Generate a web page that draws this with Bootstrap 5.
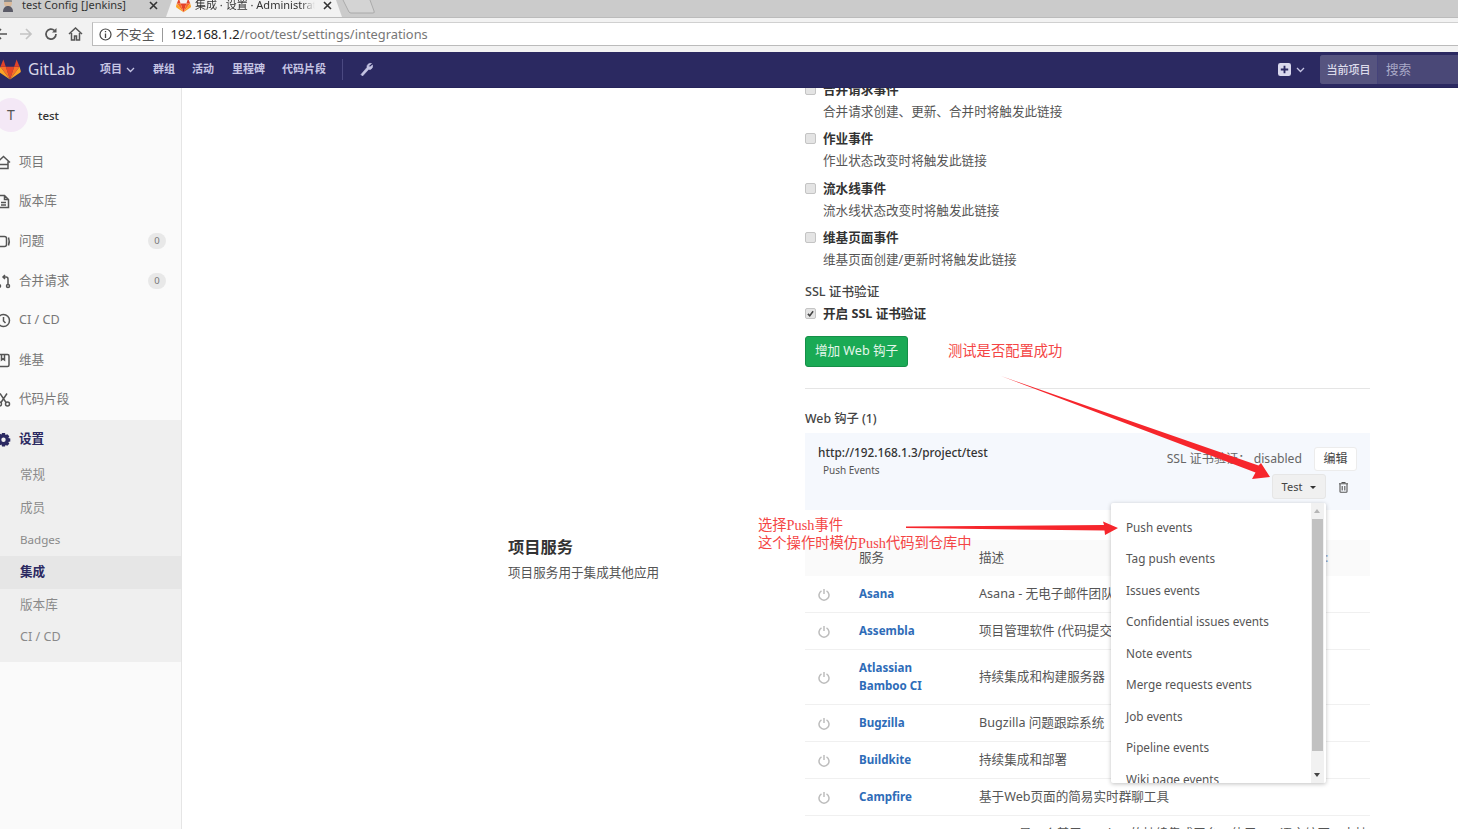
<!DOCTYPE html>
<html lang="zh-CN">
<head>
    <meta charset="UTF-8">
    <title>集成 · 设置 · Administrator</title>
    <link rel="stylesheet" href="https://cdn.jsdelivr.net/npm/bootstrap@5.3.2/dist/css/bootstrap.min.css">
    <style>
        html, body { height: 100%; overflow: hidden; }
        body { font-family: "Noto Sans", "Noto Sans CJK SC", sans-serif; font-size: 12.6px; color: #555; background: #fff; position: relative; }

        /* browser chrome */
        .tab-strip { height: 17px; background: #cbcbcb; font-size: 11px; color: #333; overflow: hidden; }
        .tab-one { width: 172px; height: 17px; padding-left: 22px; line-height: 10px; position: relative; }
        .tab-one .tab-close { left: 149px; }
        .tab-active { width: 176px; height: 17px; margin-left: -6px; background: #f2f2f2; clip-path: polygon(0 100%, 6px 0, 170px 0, 176px 100%); line-height: 10px; padding-left: 29px; position: relative; }
        .tab-active .tab-close { left: 157px; }
        .tab-active .tab-title { width: 120px; white-space: nowrap; overflow: hidden; -webkit-mask-image: linear-gradient(90deg, #000 88%, transparent); mask-image: linear-gradient(90deg, #000 88%, transparent); }
        .tab-close { position: absolute; top: 1px; width: 9px; height: 9px; }
        .tab-fav { position: absolute; top: -1px; left: 1px; }
        .tab-active .tab-fav { left: 10px; top: -2px; }
        .browser-bar { height: 35px; background: #f2f2f2; border-top: 1px solid #bbb; padding: 4px 0 6px 0; }
        .bar-btn { width: 25px; text-align: center; line-height: 0; }
        .omnibox { height: 24px; margin-left: 4px; flex: 1; background: #fff; border: 1px solid #bbb; border-right: 0; border-top-color: #d0d0d0; padding: 1px 0 0 6px; font-size: 12.85px; color: #555; }
        .omni-sep { width: 1px; height: 14px; background: #999; margin: 0 8px 0 7px; }
        .omni-host { color: #222; }
        .omni-path { color: #777; }

        /* gitlab header */
        .gl-nav { height: 36px; background: #2b2961; padding: 0; flex-wrap: nowrap; border-bottom: 1px solid #26245a; }
        .gl-brand { font-size: 15.5px; color: #d8d7e8; margin-left: -1px; width: 101px; gap: 7px; }
        .gl-links { font-size: 11px; font-weight: 700; color: #c5c4e3; }
        .gl-links span { display: block; }
        .gl-div { width: 1px; height: 21px; background: #4b4981; margin: 0 18px 0 16px; }
        .gl-search { width: 138px; height: 29px; margin-left: 15px; background: #4a4877; border-radius: 3px 0 0 3px; font-size: 12.6px; color: #a9a8c7; }
        .gl-scope { width: 58px; height: 100%; background: #56547f; color: #dcdbea; font-size: 11px; font-weight: 500; line-height: 29px; text-align: center; border-radius: 3px 0 0 3px; border-right: 1px solid #45437a; }
        .gl-placeholder { padding-left: 8px; line-height: 29px; }

        /* sidebar */
        .page-body { flex: 1; min-height: 0; overflow: hidden; }
        .side-col { width: 182px; flex: none; background: #fafafa; border-right: 1px solid #e5e5e5; color: #777; font-size: 12.6px; }
        .side-ctx { height: 54.5px; gap: 10px; margin-left: -6px; color: #333; font-weight: 500; font-size: 11.5px; }
        .side-avatar { width: 34px; height: 34px; border-radius: 50%; background: #f4e8f6; color: #555; font-size: 14px; line-height: 34px; text-align: center; font-weight: 400; }
        .side-item { height: 39.6px; gap: 8px; color: #777; padding-right: 15px; margin-left: -4px; }
        .side-item svg { flex: none; width: 15px; height: 15px; stroke: #555; fill: none; stroke-width: 1.5; }
        .side-count { margin-left: auto; background: #e8e8e8; color: #777; font-size: 9.5px; font-weight: 400; width: 18px; height: 16px; line-height: 16px; padding: 0; border-radius: 8px; text-align: center; }
        .side-open { background: #efefef; padding-bottom: 8px; }
        .side-open .side-head { color: #2b2961; font-weight: 700; }
        .side-open .side-head svg { fill: #2b2961; stroke: none; }
        .side-sub { height: 32.4px; line-height: 32.4px; padding-left: 20px; color: #8a8a8a; }
        .side-sub-on { background: #e6e6e6; color: #2b2961; font-weight: 700; }
        .side-latin { font-size: 11.6px; }

        /* main settings */
        .main-col { flex: 1; min-width: 0; padding-left: 326px; overflow: hidden; }
        .main-scroll { margin-top: -8px; }
        .left-col { width: 297px; flex: none; }
        .right-col { width: 565px; flex: none; }
        .hook-event { height: 49.33px; padding-left: 18px; position: relative; }
        .hook-event label, .ssl-check label { font-weight: 700; color: #333; line-height: 20px; display: block; }
        .hook-event p { margin: 2px 0 0; line-height: 20px; color: #555; }
        .form-check-input.hook-box { position: absolute; left: 0; top: 4px; width: 11px; height: 11px; margin: 0; border: 1px solid #c4c4c4; border-radius: 2px; background-color: #e4e4e4; }
        .form-check-input.hook-box:checked { background-color: #e4e4e4; border-color: #c4c4c4; background-image: url("data:image/svg+xml,%3csvg xmlns='http://www.w3.org/2000/svg' viewBox='0 0 12 12'%3e%3cpath fill='none' stroke='%23444' stroke-width='2' d='M2.5 6.5l2.5 2.5 4.5-6'/%3e%3c/svg%3e"); background-size: 100%; }
        .ssl-title { margin-top: 5px; line-height: 20px; color: #444; font-weight: 500; }
        .ssl-check { height: 20px; margin-top: 2px; padding-left: 18px; position: relative; }
        .add-hook { margin-top: 12px; width: 103px; height: 31px; padding: 0; font-size: 12.6px; background: #1aaa55; border-color: #168f48; border-radius: 3px; color: #e4f6eb; }
        .hook-rule { margin: 21px 0 0; border-color: #e5e5e5; opacity: 1; }
        .hook-count { margin: 20px 0 0; height: 24px; line-height: 20px; font-size: 12.3px; font-weight: 500; color: #444; }
        .hook-panel { height: 77px; background: #f5f8fd; padding: 14px 13px 0; margin-bottom: 30px; }
        .hook-url { font-size: 11.8px; font-weight: 500; color: #333; line-height: 20px; margin-top: -5px; }
        .hook-tag { font-size: 10px; padding-left: 5px; line-height: 16px; color: #555; }
        .hook-ssl { margin-right: 12px; color: #666; font-size: 12.2px; }
        .hook-edit { width: 43px; height: 24px; padding: 0; font-size: 12px; background: #fff; border: 1px solid #ececec; border-radius: 3px; color: #444; }
        .hook-test { width: 54px; height: 25px; margin-top: 3px; padding: 0; font-size: 11px; background: #f0f0f0; border: 1px solid #e6e6e6; border-radius: 3px; color: #444; }
        .hook-test::after { margin-left: 8px; vertical-align: 2px; border-top-color: #333; }
        .hook-trash { width: 31px; padding-left: 4px; text-align: center; margin-top: 3px; line-height: 23px; }
        .sect-title { font-size: 16.3px; font-weight: 700; color: #333; line-height: 20px; margin: -3px 0 0; }
        .sect-desc { margin: 6px 0 0; line-height: 20px; color: #555; }
        .svc-table { table-layout: fixed; width: 565px; margin: 0; font-size: 12.6px; color: #555; }
        .svc-table th { height: 36px; background: #fafafa; font-weight: 400; color: #555; padding: 0; vertical-align: middle; border-bottom: 0; }
        .svc-table td { padding: 9px 0; line-height: 18px; vertical-align: middle; border-bottom: 1px solid #f0f0f0; color: #555; background: transparent; }
        .svc-power { width: 54px; }
        .svc-power svg { display: block; margin-left: 13px; }
        .svc-name { width: 120px; }
        .svc-table td.svc-name { padding-right: 20px; }
        .svc-name a { color: #2e6cb8; font-weight: 700; font-size: 11.6px; text-decoration: none; }
        .svc-table th.svc-last { width: 60px; padding-left: 15px; color: #7a9cc6; }

        /* open test menu */
        .test-menu { position: absolute; display: block; left: 1111px; top: 503px; width: 215px; height: 280px; padding: 0; margin: 0; border: 0; border-radius: 2px; background: #fff; box-shadow: 0 1px 4px rgba(0,0,0,.25); overflow: hidden; z-index: 5; font-size: 11.75px; }
        .test-list { list-style: none; margin: 0; padding: 8.5px 0 0 15px; }
        .test-list li { height: 31.5px; line-height: 31.5px; color: #555; white-space: nowrap; }
        .test-scroll { position: absolute; right: 2px; top: 0; bottom: 0; width: 13px; background: #f1f1f1; }
        .test-thumb { position: absolute; left: 1px; right: 1px; top: 16px; height: 232px; background: #c1c1c1; }
        .test-arrow { position: absolute; left: 3px; width: 0; height: 0; border-left: 3.5px solid transparent; border-right: 3.5px solid transparent; }
        .test-up { top: 6px; border-bottom: 4px solid #b5b5b5; }
        .test-down { bottom: 6px; border-top: 4px solid #444; }

        /* red notes drawn on top of the screenshot */
        .note { position: absolute; z-index: 6; color: #f44545; font-family: "Liberation Serif", "Noto Sans CJK SC", serif; font-size: 14.3px; line-height: 18px; white-space: nowrap; }
        .note-arrows { position: absolute; left: 0; top: 0; z-index: 7; pointer-events: none; }
    </style>
</head>
<body class="d-flex flex-column">
    <div class="tab-strip d-flex">
        <div class="tab-one">
            <svg class="tab-fav" width="15" height="13" viewBox="0 0 15 13"><circle cx="7" cy="4" r="4" fill="#d9b99a"/><path d="M2 13c0-5 3-6 5-6s5 1 5 6z" fill="#5a5a66"/><path d="M3 3a4 4 0 0 1 8 0z" fill="#8c8c8c"/></svg>
            test Config [Jenkins]
            <svg class="tab-close" viewBox="0 0 9 9"><path d="M1 1l7 7M8 1l-7 7" stroke="#333" stroke-width="1.6"/></svg>
        </div>
        <div class="tab-active">
            <svg class="tab-fav" width="15" height="15" viewBox="0 0 36 36"><path d="M18 34L25 13H11z" fill="#e24329"/><path d="M18 34L11 13H2z" fill="#fc6d26"/><path d="M2 13L0 20c0 1 0 2 1 2.500L18 34z" fill="#fca326"/><path d="M2 13h9L7 1z" fill="#e24329"/><path d="M18 34l7-21h9z" fill="#fc6d26"/><path d="M34 13l2 7c0 1 0 2-1 2.500L18 34z" fill="#fca326"/><path d="M34 13h-9l4-12z" fill="#e24329"/></svg>
            <div class="tab-title">集成 · 设置 · Administrator</div>
            <svg class="tab-close" viewBox="0 0 9 9"><path d="M1 1l7 7M8 1l-7 7" stroke="#333" stroke-width="1.6"/></svg>
        </div>
        <svg class="ms-0" width="36" height="17" viewBox="0 0 36 17"><path d="M1 0l6 12q1 1 2 1h22q2 0 1-2L28 0" fill="#d4d4d4" stroke="#aaa"/></svg>
    </div>

    <div class="browser-bar d-flex align-items-center">
        <div class="bar-btn" style="margin-left:-12px">
            <svg width="14" height="14" viewBox="0 0 14 14"><path d="M13 7H2M7 2L2 7l5 5" fill="none" stroke="#555" stroke-width="1.700"/></svg>
        </div>
        <div class="bar-btn">
            <svg width="14" height="14" viewBox="0 0 14 14"><path d="M1 7h11M7 2l5 5-5 5" fill="none" stroke="#c4c4c4" stroke-width="1.700"/></svg>
        </div>
        <div class="bar-btn">
            <svg width="14" height="14" viewBox="0 0 14 14"><path d="M12 7a5 5 0 1 1-1.500-3.500" fill="none" stroke="#555" stroke-width="1.700"/><path d="M12.500 1v4.500H8z" fill="#555"/></svg>
        </div>
        <div class="bar-btn">
            <svg width="15" height="14" viewBox="0 0 15 14"><path d="M1 7l6.500-6L14 7M3.500 6v7h3V9h2v4h3V6" fill="none" stroke="#555" stroke-width="1.500"/></svg>
        </div>
        <div class="omnibox d-flex align-items-center">
            <svg class="me-1" width="13" height="13" viewBox="0 0 13 13"><circle cx="6.500" cy="6.500" r="5.500" fill="none" stroke="#444" stroke-width="1.200"/><path d="M6.500 5.500V10M6.500 3v1.300" stroke="#444" stroke-width="1.300"/></svg>
            <span>不安全</span>
            <span class="omni-sep"></span>
            <span class="omni-host">192.168.1.2</span><span class="omni-path">/root/test/settings/integrations</span>
        </div>
    </div>

    <nav class="navbar gl-nav">
        <div class="d-flex align-items-center gl-brand">
            <svg width="22" height="21" viewBox="0 0 36 35"><path d="M18 34L25 13H11z" fill="#e24329"/><path d="M18 34L11 13H2z" fill="#fc6d26"/><path d="M2 13L0 20c0 1 0 2 1 2.500L18 34z" fill="#fca326"/><path d="M2 13h9L7 1z" fill="#e24329"/><path d="M18 34l7-21h9z" fill="#fc6d26"/><path d="M34 13l2 7c0 1 0 2-1 2.500L18 34z" fill="#fca326"/><path d="M34 13h-9l4-12z" fill="#e24329"/></svg>
            <span>GitLab</span>
        </div>
        <div class="d-flex align-items-center gl-links">
            <span>项目</span>
            <svg class="ms-1" style="margin-right:18px" width="9" height="6" viewBox="0 0 9 6"><path d="M1 1l3.500 3.500L8 1" fill="none" stroke="#c5c4e3" stroke-width="1.300"/></svg>
            <span style="margin-right:17px">群组</span>
            <span style="margin-right:18px">活动</span>
            <span style="margin-right:17px">里程碑</span>
            <span>代码片段</span>
            <i class="gl-div"></i>
            <svg style="margin-left:-2px" width="14" height="15" viewBox="0 0 14 15"><path d="M12.500 1.500a3.500 3.500 0 0 0-4.500 4L2 12.500 3.500 14l6-6.500a3.500 3.500 0 0 0 4-4.500L11 5 9.500 4z" fill="#c5c4e3" stroke="#c5c4e3" stroke-width=".6"/></svg>
        </div>
        <div class="d-flex align-items-center ms-auto">
            <svg width="13" height="13" viewBox="0 0 14 14"><rect width="14" height="14" rx="2.500" fill="#d9d8ec"/><path d="M7 3v8M3 7h8" stroke="#2b2961" stroke-width="2"/></svg>
            <svg style="margin-left:5px" width="9" height="6" viewBox="0 0 9 6"><path d="M1 1l3.500 3.500L8 1" fill="none" stroke="#c5c4e3" stroke-width="1.300"/></svg>
            <div class="gl-search d-flex">
                <div class="gl-scope">当前项目</div>
                <div class="gl-placeholder">搜索</div>
            </div>
        </div>
    </nav>

    <div class="page-body d-flex">
        <aside class="side-col">
            <div class="side-ctx d-flex align-items-center">
                <div class="side-avatar">T</div>
                <span>test</span>
            </div>
            <div class="side-item d-flex align-items-center">
                <svg viewBox="0 0 15 15"><path d="M1 7.500L7.500 1.500 14 7.500M3 6.500V13.500h9V6.500M3 9.500h9"/></svg><span>项目</span>
            </div>
            <div class="side-item d-flex align-items-center">
                <svg viewBox="0 0 15 15"><path d="M2.500 1.500h6l4 4v8h-10zM8.500 1.500v4h4M5 8.500h5M5 11h5"/></svg><span>版本库</span>
            </div>
            <div class="side-item d-flex align-items-center">
                <svg viewBox="0 0 15 15"><rect x="1.500" y="2.500" width="9" height="10" rx="2"/><path d="M12.500 3.500q1.500 4 0 8"/></svg><span>问题</span><span class="badge side-count">0</span>
            </div>
            <div class="side-item d-flex align-items-center">
                <svg viewBox="0 0 15 15"><circle cx="3" cy="12" r="1.500"/><circle cx="12" cy="12" r="1.500"/><path d="M3 10.500V3M12 10.500V5q0-2-2-2H7M9 1L7 3l2 2"/></svg><span>合并请求</span><span class="badge side-count">0</span>
            </div>
            <div class="side-item d-flex align-items-center">
                <svg viewBox="0 0 15 15"><circle cx="7.500" cy="7.500" r="6"/><path d="M7.500 4v4l2 2"/></svg><span>CI / CD</span>
            </div>
            <div class="side-item d-flex align-items-center">
                <svg viewBox="0 0 15 15"><rect x="2" y="1.500" width="11" height="12" rx="1.500"/><path d="M5.500 1.500V7l1.500-1.200L8.500 7V1.500"/></svg><span>维基</span>
            </div>
            <div class="side-item d-flex align-items-center">
                <svg viewBox="0 0 15 15"><circle cx="3.500" cy="12" r="2"/><circle cx="11.500" cy="12" r="2"/><path d="M5 10.500L11 1.500M10 10.500L4 1.500"/></svg><span>代码片段</span>
            </div>
            <div class="side-open">
                <div class="side-item side-head d-flex align-items-center">
                    <svg viewBox="0 0 15 15"><path fill-rule="evenodd" d="M6 1h3l.5 2 1.800-.8 2 2.100-1 1.700 2 .5v3l-2 .5 1 1.700-2 2.100-1.800-.8L9 14.500H6l-.5-2-1.800.8-2-2.100 1-1.700-2-.5v-3l2-.5-1-1.700 2-2.100 1.800.8zM7.500 5.500a2.200 2.200 0 1 0 0 4.400 2.200 2.200 0 0 0 0-4.400z"/></svg><span>设置</span>
                </div>
                <div class="side-sub">常规</div>
                <div class="side-sub">成员</div>
                <div class="side-sub side-latin">Badges</div>
                <div class="side-sub side-sub-on">集成</div>
                <div class="side-sub">版本库</div>
                <div class="side-sub">CI / CD</div>
            </div>
        </aside>

        <main class="main-col">
            <div class="main-scroll">
                <div class="d-flex">
                    <div class="left-col"></div>
                    <div class="right-col">
                        <div class="hook-event"><input class="form-check-input hook-box" type="checkbox"><label>合并请求事件</label><p>合并请求创建、更新、合并时将触发此链接</p></div>
                        <div class="hook-event"><input class="form-check-input hook-box" type="checkbox"><label>作业事件</label><p>作业状态改变时将触发此链接</p></div>
                        <div class="hook-event"><input class="form-check-input hook-box" type="checkbox"><label>流水线事件</label><p>流水线状态改变时将触发此链接</p></div>
                        <div class="hook-event"><input class="form-check-input hook-box" type="checkbox"><label>维基页面事件</label><p>维基页面创建/更新时将触发此链接</p></div>
                        <div class="ssl-title">SSL 证书验证</div>
                        <div class="ssl-check"><input class="form-check-input hook-box" type="checkbox" checked><label>开启 SSL 证书验证</label></div>
                        <button class="btn btn-success add-hook" type="button">增加 Web 钩子</button>
                        <hr class="hook-rule">
                        <h5 class="hook-count">Web 钩子 (1)</h5>
                        <div class="hook-panel d-flex justify-content-between">
                            <div>
                                <div class="hook-url">http://192.168.1.3/project/test</div>
                                <div class="hook-tag">Push Events</div>
                            </div>
                            <div>
                                <div class="d-flex align-items-center justify-content-end">
                                    <span class="hook-ssl">SSL 证书验证： disabled</span>
                                    <button class="btn hook-edit" type="button">编辑</button>
                                </div>
                                <div class="d-flex justify-content-end">
                                    <button class="btn hook-test dropdown-toggle" type="button">Test</button>
                                    <div class="hook-trash">
                                        <svg width="11" height="12" viewBox="0 0 11 12"><path d="M3.500 1.500h4M1 2.800h9M2 3v7.500q0 .8.800.8h5.400q.8 0 .8-.8V3M4.200 5v4.500M6.800 5v4.500" fill="none" stroke="#555" stroke-width="1.100"/></svg>
                                    </div>
                                </div>
                            </div>
                        </div>
                    </div>
                </div>

                <div class="d-flex">
                    <div class="left-col">
                        <h4 class="sect-title">项目服务</h4>
                        <p class="sect-desc">项目服务用于集成其他应用</p>
                    </div>
                    <div class="right-col">
                        <table class="table svc-table">
                            <thead>
                                <tr><th class="svc-power"></th><th class="svc-name">服务</th><th>描述</th><th class="svc-last">:</th></tr>
                            </thead>
                            <tbody id="svcRows"></tbody>
                        </table>
                    </div>
                </div>
            </div>
        </main>
    </div>

    <ul class="dropdown-menu test-menu">
        <li>
            <ul class="test-list">
                <li>Push events</li>
                <li>Tag push events</li>
                <li>Issues events</li>
                <li>Confidential issues events</li>
                <li>Note events</li>
                <li>Merge requests events</li>
                <li>Job events</li>
                <li>Pipeline events</li>
                <li>Wiki page events</li>
            </ul>
        </li>
        <li class="test-scroll">
            <div class="test-arrow test-up"></div>
            <div class="test-thumb"></div>
            <div class="test-arrow test-down"></div>
        </li>
    </ul>

    <div class="note" style="left:948px;top:342px">测试是否配置成功</div>
    <div class="note" style="left:758px;top:516px">选择Push事件<br>这个操作时模仿Push代码到仓库中</div>
    <svg class="note-arrows" width="1458" height="829" viewBox="0 0 1458 829">
        <path d="M1001 376L1258.500 465.500 1261 463 1270 477 1252 479 1255.500 472.500z" fill="#f6262c"/>
        <path d="M906 526.500L1104 525 1103 521.500 1118 528 1105 535 1104.500 530.500 906 528z" fill="#f6262c"/>
    </svg>

    <script src="https://cdn.jsdelivr.net/npm/bootstrap@5.3.2/dist/js/bootstrap.bundle.min.js"></script>
    <script>
        const services = [
            ["Asana", "Asana - 无电子邮件团队协作"],
            ["Assembla", "项目管理软件 (代码提交端点)"],
            ["Atlassian Bamboo CI", "持续集成和构建服务器"],
            ["Bugzilla", "Bugzilla 问题跟踪系统"],
            ["Buildkite", "持续集成和部署"],
            ["Campfire", "基于Web页面的简易实时群聊工具"],
            ["Drone CI", "Drone 是一个基于 Docker 的持续集成平台，使用 Go 语言编写，支持多种代码托管服务和构建环境"]
        ];
        const powerIcon = '<svg width="12" height="13" viewBox="0 0 12 13"><path d="M3.500 2.800a5 5 0 1 0 5 0M6 1v5" fill="none" stroke="#bdbdbd" stroke-width="1.500"/></svg>';
        document.getElementById("svcRows").innerHTML = services.map(s => `
            <tr>
                <td class="svc-power">${powerIcon}</td>
                <td class="svc-name"><a href="#">${s[0]}</a></td>
                <td colspan="2">${s[1]}</td>
            </tr>`).join("");
    </script>
</body>
</html>
